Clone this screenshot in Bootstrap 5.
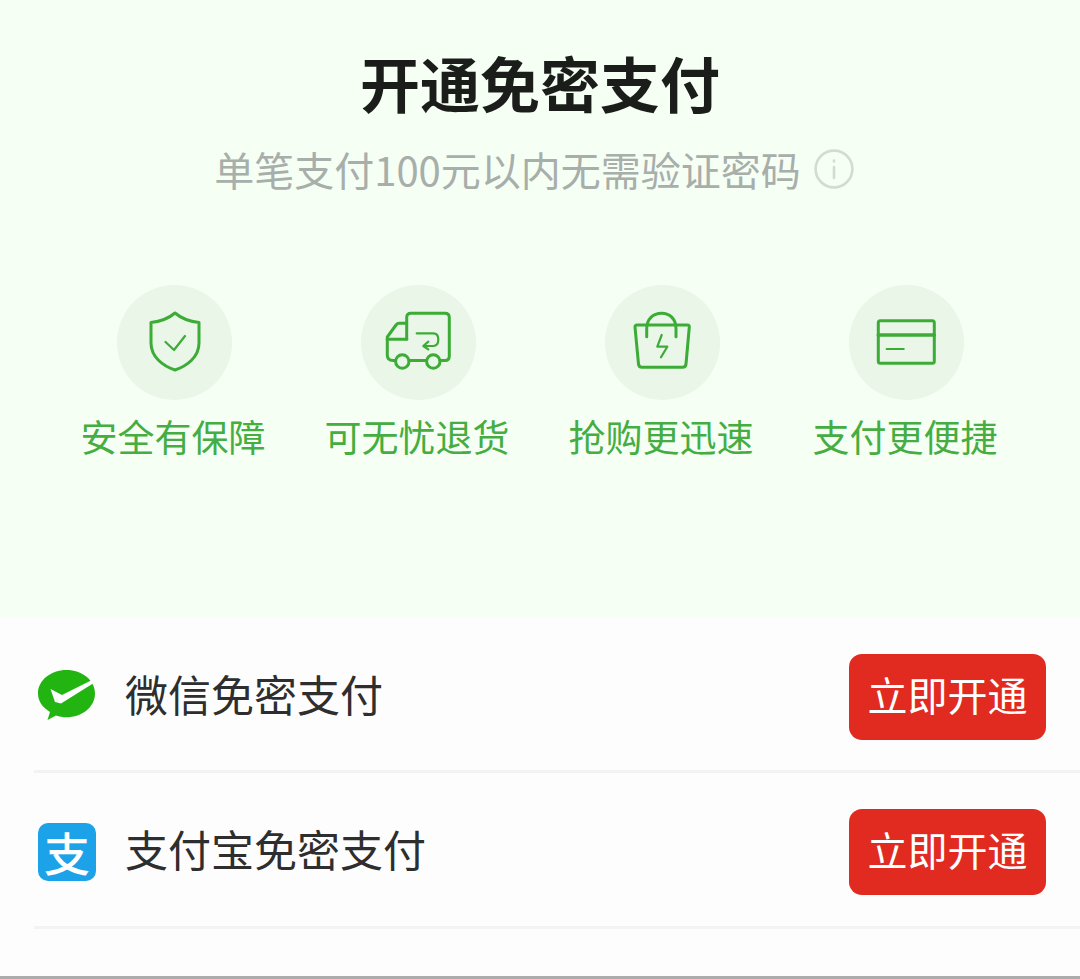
<!DOCTYPE html>
<html lang="zh-CN">
<head>
  <meta charset="UTF-8" />
  <meta name="viewport" content="width=device-width, initial-scale=1.0"/>
  <link href="https://cdn.jsdelivr.net/npm/bootstrap@5.3.5/dist/css/bootstrap.min.css" rel="stylesheet" />
  <script src="https://cdn.jsdelivr.net/npm/bootstrap@5.3.5/dist/js/bootstrap.bundle.min.js" defer></script>
  <title>开通免密支付</title>
  <style>
    body {
      font-family: "Noto Sans CJK SC", "Noto Sans", sans-serif;
      background: #fdfdfd;
      height: 979px;
      overflow: hidden;
    }

    .hero {
      height: 618px;
      padding-top: 47px;
      background: #f5fff4;
    }

    .hero-title {
      font-size: 60px;
      line-height: 70px;
      font-weight: 700;
      color: #1a1d1a;
      margin: 0;
    }

    .hero-sub {
      margin-top: 31px;
      padding-right: 12px;
      height: 42px;
      font-size: 40px;
      line-height: 42px;
      color: #a8aeaa;
      gap: 13px;
    }

    .perks {
      margin-top: 95px;
      padding: 0 52px;
      display: grid;
      grid-template-columns: repeat(4, 244px);
    }

    .perk-circle {
      width: 115px;
      height: 115px;
      border-radius: 50%;
      background: #e9f6e8;
    }

    .perk-circle svg {
      display: block;
      fill: none;
      stroke: #3cac37;
      stroke-width: 3;
      stroke-linecap: round;
      stroke-linejoin: round;
    }

    .perk-label {
      margin-top: 11px;
      margin-right: 2px;
      font-size: 37px;
      line-height: 50px;
      color: #45ad41;
    }

    .pay-row {
      height: 155px;
      margin-left: 34px;
      padding-top: 5px;
      padding-right: 34px;
      border-bottom: 3px solid #f3f3f3;
    }

    .pay-row + .pay-row {
      height: 156px;
    }

    .pay-icon {
      width: 58px;
      height: 58px;
      flex-shrink: 0;
      margin-left: 4px;
    }

    .ali-icon {
      border-radius: 10px;
      background: #1ba2e8;
      color: #fff;
      font-size: 46px;
      font-weight: 500;
      line-height: 56px;
      text-align: center;
    }

    .pay-name {
      margin-left: 29px;
      margin-bottom: 8px;
      font-size: 43px;
      line-height: 60px;
      color: #2e2e2e;
    }

    .btn-open {
      width: 197px;
      height: 86px;
      padding: 0 0 6px;
      border: 0;
      border-radius: 13px;
      background: #e12b21;
      color: #fff;
      font-size: 40px;
      line-height: 80px;
    }

    .btn-open:hover {
      background: #e12b21;
      color: #fff;
    }

    .bottom-line {
      height: 3px;
      margin-top: 47px;
      background: #acacac;
    }
  </style>
</head>
<body>

  <div class="hero text-center">
    <h1 class="hero-title">开通免密支付</h1>
    <div class="hero-sub d-flex justify-content-center align-items-center">
      <span>单笔支付100元以内无需验证密码</span>
      <svg width="40" height="40" viewBox="0 0 40 40" fill="none" stroke="#d4dbd3" stroke-width="2.6" stroke-linecap="round">
        <circle cx="20" cy="20" r="18.4"/>
        <path d="M20 18v11"/>
        <path d="M20 11.500v1"/>
      </svg>
    </div>

    <div class="perks">
      <div class="d-flex flex-column align-items-center">
        <div class="perk-circle">
          <svg width="115" height="115" viewBox="0 0 115 115">
            <path d="M58 28C51 34 43 36.500 34 37.500V58C34 72 46 81 58 85C70 81 82 72 82 58V37.500C73 36.500 65 34 58 28Z"/>
            <path d="M48.500 57L57 65L68 51" stroke-width="2.200"/>
          </svg>
        </div>
        <div class="perk-label">安全有保障</div>
      </div>
      <div class="d-flex flex-column align-items-center">
        <div class="perk-circle">
          <svg width="115" height="115" viewBox="0 0 115 115">
            <path d="M45.700 54V32.500Q45.700 28.300 50 28.300H84Q88.300 28.300 88.300 32.500V71Q88.300 75.500 84 75.500H79"/>
            <path d="M65.500 75.500H48"/>
            <path d="M34.500 75.500H32Q26.300 75.500 26.300 70V52L35 40Q36.500 38.300 38 38.300H45.700"/>
            <path d="M26.300 54.300H45.700"/>
            <circle cx="41.300" cy="76.500" r="6.700"/>
            <circle cx="72.300" cy="76.500" r="6.700"/>
            <path d="M55.700 48.300H72.300Q77.300 48.300 77.300 54.300Q77.300 61 72.300 61H62.300M67.300 56.700L62.300 61L67.300 64.300" stroke-width="2.200"/>
          </svg>
        </div>
        <div class="perk-label">可无忧退货</div>
      </div>
      <div class="d-flex flex-column align-items-center">
        <div class="perk-circle">
          <svg width="115" height="115" viewBox="0 0 115 115">
            <path d="M32 40H82.500Q84.500 40 84.300 42L81 79Q80.700 82.300 77.500 82.300H37Q33.800 82.300 33.500 79L30 42Q30 40 32 40Z"/>
            <path d="M41.700 51.700V44C41.700 34 48 28.300 56.700 28.300C65 28.300 71 34 71 44V51.700"/>
            <path d="M56.700 50L52.300 61.700H62.300L56 72.300" stroke-width="2.200"/>
          </svg>
        </div>
        <div class="perk-label">抢购更迅速</div>
      </div>
      <div class="d-flex flex-column align-items-center">
        <div class="perk-circle">
          <svg width="115" height="115" viewBox="0 0 115 115">
            <rect x="29.300" y="35.700" width="56" height="42.600" rx="2"/>
            <path d="M29.300 50H85.300" stroke-width="3.500"/>
            <path d="M37.700 64H54.700" stroke-width="2.200"/>
          </svg>
        </div>
        <div class="perk-label">支付更便捷</div>
      </div>
    </div>
  </div>

  <div class="pay-row d-flex align-items-center justify-content-between">
    <div class="d-flex align-items-center">
      <svg class="pay-icon" viewBox="0 0 58 58">
        <path d="M28.500 2C13 2 0 12 0 25.500C0 33 4 39 12 44L9.500 52L18 47.500C21 48.500 25 49.300 28.500 49.300C44 49.300 57 39 57 25.500C57 12 44 2 28.500 2Z" fill="#22b512"/>
        <path d="M12.500 21L24 27L54 12L55 15.500L23 35.500L17 34Z" fill="#fff"/>
      </svg>
      <div class="pay-name">微信免密支付</div>
    </div>
    <button type="button" class="btn btn-open">立即开通</button>
  </div>

  <div class="pay-row d-flex align-items-center justify-content-between">
    <div class="d-flex align-items-center">
      <div class="pay-icon ali-icon">支</div>
      <div class="pay-name">支付宝免密支付</div>
    </div>
    <button type="button" class="btn btn-open">立即开通</button>
  </div>

  <div class="bottom-line"></div>

</body>
</html>
